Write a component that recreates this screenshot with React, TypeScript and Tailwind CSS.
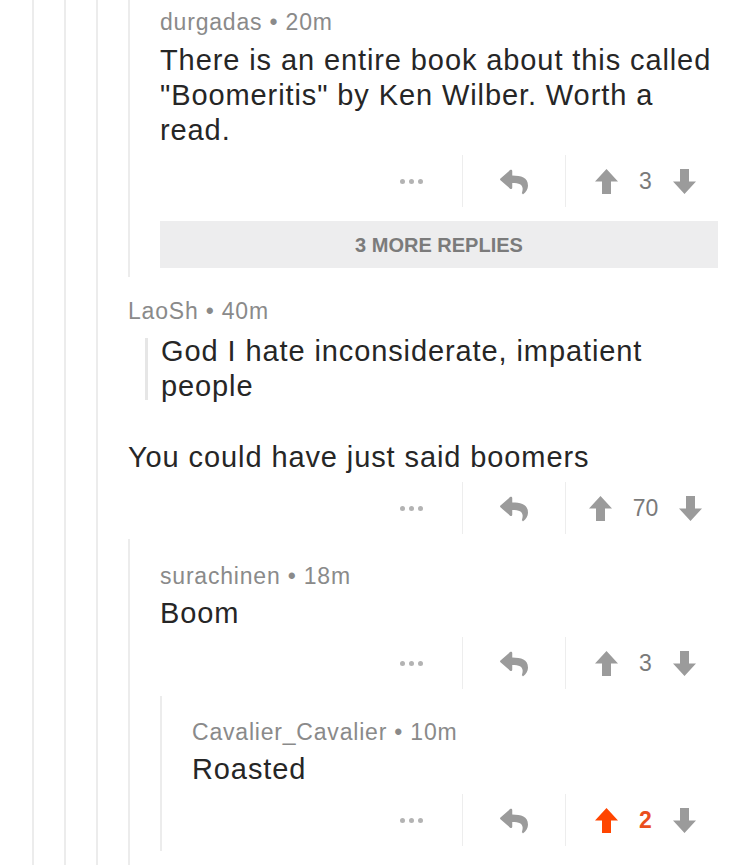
import React from "react";
import { FaReply } from "react-icons/fa";

const FONT = { fontFamily: "'Liberation Sans', Arial, sans-serif" };

function UpArrow({ color }: { color: string }) {
  return (
    <svg width="23" height="25" viewBox="0 0 23 25">
      <polygon points="11.5,0 23,12.5 16,12.5 16,25 7,25 7,12.5 0,12.5" fill={color} />
    </svg>
  );
}
function DownArrow({ color }: { color: string }) {
  return (
    <svg width="23" height="25" viewBox="0 0 23 25">
      <polygon points="7,0 16,0 16,12.5 23,12.5 11.5,25 0,12.5 7,12.5" fill={color} />
    </svg>
  );
}

function ActionBar({ votes, active, mt }: { votes: string; active?: boolean; mt: string }) {
  return (
    <div className={mt + " -mr-[7px] flex h-[52px] items-stretch justify-end"}>
      <div className="flex w-[102px] items-center justify-center gap-[4px]">
        <span className="h-[5px] w-[5px] rounded-full bg-[#b3b3b3]" />
        <span className="h-[5px] w-[5px] rounded-full bg-[#b3b3b3]" />
        <span className="h-[5px] w-[5px] rounded-full bg-[#b3b3b3]" />
      </div>
      <div className="w-px bg-[#ededed]" />
      <div className="flex w-[102px] items-center justify-center pt-[2px]">
        <FaReply size={28} color="#9b9b9b" />
      </div>
      <div className="w-px bg-[#ededed]" />
      <div className="flex w-[159px] items-center justify-center gap-[21px]">
        <UpArrow color={active ? "#ff4500" : "#9b9b9b"} />
        <span
          className={
            active
              ? "text-[23px] font-bold leading-none text-[#ea4f1d]"
              : "text-[23px] leading-none text-[#7a7a7a]"
          }
        >
          {votes}
        </span>
        <DownArrow color="#9b9b9b" />
      </div>
    </div>
  );
}

function Meta({ user, time, mb }: { user: string; time: string; mb: string }) {
  return (
    <div className={mb + " text-[23px] leading-[26px] tracking-[0.8px] text-[#8a8a8a]"}>
      {user} • {time}
    </div>
  );
}

function Thread({ children, grow }: { children: React.ReactNode; grow?: boolean }) {
  return (
    <div className={"flex flex-col border-l-2 border-[#ececec] pl-[30px]" + (grow ? " flex-1" : "")}>
      {children}
    </div>
  );
}

const BODY = "text-[29px] leading-[35px] tracking-[0.9px] text-[#262626]";

export default function App() {
  return (
    <div className="h-[865px] overflow-hidden bg-white pl-[32px] pr-[32px]" style={FONT}>
      <div className="flex h-full flex-col border-l-2 border-[#ececec] pl-[30px]">
        <div className="flex h-full flex-col border-l-2 border-[#ececec] pl-[30px]">
          <div className="flex h-full flex-col border-l-2 border-[#ececec] pl-[30px]">
            {/* durgadas thread */}
            <Thread>
              <div className="flex flex-col pt-[9px] pb-[9px]">
                <Meta user="durgadas" time="20m" mb="mb-[8px]" />
                <p className={BODY}>
                  There is an entire book about this called "Boomeritis" by Ken Wilber. Worth a read.
                </p>
                <ActionBar votes="3" mt="mt-[7px]" />
                <div className="mt-[14px] flex h-[47px] items-center justify-center bg-[#ededee] text-[20px] font-bold text-[#7b7b7b]">
                  3 MORE REPLIES
                </div>
              </div>
            </Thread>

            {/* LaoSh */}
            <div className="flex flex-col pt-[21px]">
              <Meta user="LaoSh" time="40m" mb="mb-[14px]" />
              <div className="ml-[17px] flex border-l-[3px] border-[#e6e6e6] pl-[13px]">
                <p className={"-my-[4px] " + BODY}>God I hate inconsiderate, impatient people</p>
              </div>
              <p className={"mt-[40px] " + BODY}>You could have just said boomers</p>
              <ActionBar votes="70" mt="mt-[7px]" />
            </div>

            {/* surachinen thread */}
            <div className="mt-[5px] flex flex-1 flex-col">
              <Thread grow>
                <div className="flex flex-col pt-[24px]">
                  <Meta user="surachinen" time="18m" mb="mb-[7px]" />
                  <p className={BODY}>Boom</p>
                  <ActionBar votes="3" mt="mt-[6px]" />
                </div>
                <div className="mt-[7px]">
                  <Thread>
                    <div className="flex flex-col pt-[23px] pb-[5px]">
                      <Meta user="Cavalier_Cavalier" time="10m" mb="mb-[7px]" />
                      <p className={BODY}>Roasted</p>
                      <ActionBar votes="2" active mt="mt-[7px]" />
                    </div>
                  </Thread>
                </div>
              </Thread>
            </div>
          </div>
        </div>
      </div>
    </div>
  );
}
